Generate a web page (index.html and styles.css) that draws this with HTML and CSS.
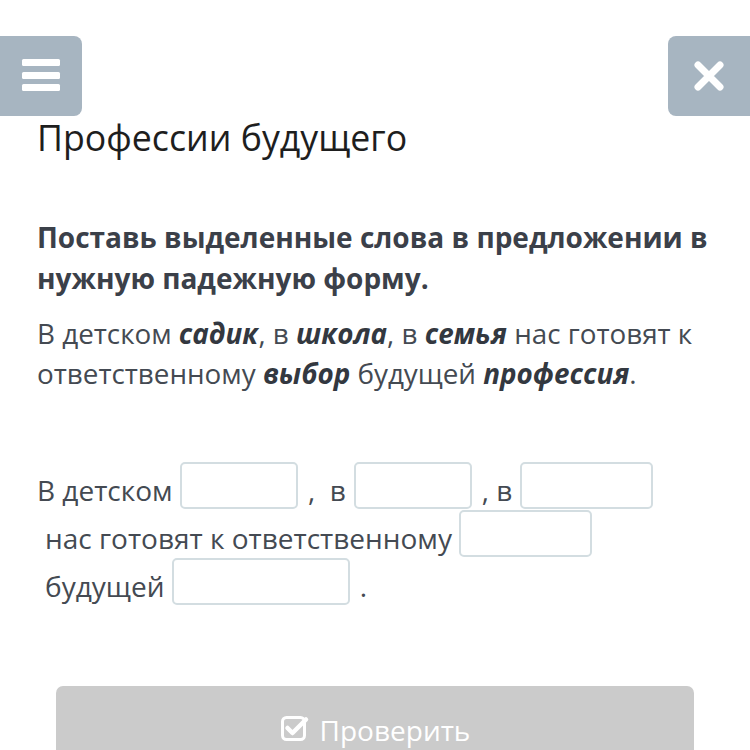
FILE: index.html
```html
<!DOCTYPE html>
<html lang="ru">
<head>
<meta charset="utf-8">
<link rel="stylesheet" href="styles.css">
</head>
<body>
<div class="topbar">
  <div class="tbtn menu">
    <svg width="40" height="36" viewBox="0 0 40 36"><rect x="1" y="1" width="38" height="7" rx="1.5" fill="#fff"/><rect x="1" y="14" width="38" height="7" rx="1.5" fill="#fff"/><rect x="1" y="26" width="38" height="7" rx="1.5" fill="#fff"/></svg>
  </div>
  <div class="tbtn close">
    <svg width="32" height="32" viewBox="0 0 32 32"><path d="M5 5 L27 27 M27 5 L5 27" stroke="#fff" stroke-width="7" stroke-linecap="round"/></svg>
  </div>
</div>
<main class="content">
  <h1 class="title">Профессии будущего</h1>
  <p class="task">Поставь выделенные слова в предложении в нужную падежную форму.</p>
  <p class="text">В детском <b><i>садик</i></b>, в <b><i>школа</i></b>, в <b><i>семья</i></b> нас готовят к ответственному <b><i>выбор</i></b> будущей <b><i>профессия</i></b>.</p>
  <div class="fill">
    <div class="row">В детском <span class="inp w118"></span><span class="gap1">,&nbsp; в</span><span class="inp w118"></span><span class="gap2">, в</span><span class="inp w133"></span></div>
    <div class="row indent">нас готовят к ответственному <span class="inp w133"></span></div>
    <div class="row indent">будущей <span class="inp w178"></span><span class="dot">.</span></div>
  </div>
</main>
<div class="btnwrap">
  <div class="check">
    <svg width="30" height="30" viewBox="0 0 30 30"><rect x="2.5" y="4.5" width="22" height="22" rx="4" fill="none" stroke="#fff" stroke-width="3"/><path d="M7.5 15 L12.5 20 L26 6.5" fill="none" stroke="#fff" stroke-width="4.5" stroke-linecap="round" stroke-linejoin="round"/></svg>
    <span>Проверить</span>
  </div>
</div>
</body>
</html>
```
FILE: styles.css
```css
html, body {
  margin: 0;
  padding: 0;
  background: #fff;
  font-family: "Open Sans", "Noto Sans", sans-serif;
  width: 750px;
  height: 750px;
  overflow: hidden;
}
.topbar {
  display: flex;
  justify-content: space-between;
  margin-top: 36px;
  height: 80px;
}
.tbtn {
  width: 82px;
  height: 80px;
  background: #a7b5c1;
  display: flex;
  align-items: center;
  justify-content: center;
}
.menu { border-radius: 0 8px 8px 0; }
.close { border-radius: 8px 0 0 8px; }
.content {
  padding: 0 37px;
}
.title {
  margin: -3px 0 0;
  font-size: 35.7px;
  font-weight: 400;
  color: #1e1e1e;
  line-height: 48px;
}
.task {
  margin: 56px 0 0;
  font-size: 28px;
  font-weight: 700;
  line-height: 41px;
  color: #3b4049;
}
.text {
  margin: 14px 0 0;
  font-size: 27.8px;
  line-height: 40px;
  color: #444a52;
}
.text b { color: #333840; }
.fill {
  margin-top: 73px;
  font-size: 28px;
  color: #444a52;
}
.row {
  display: flex;
  align-items: center;
  height: 48px;
  white-space: pre;
}
.indent { padding-left: 8px; }
.inp {
  display: inline-block;
  height: 43px;
  border: 2px solid #d3dde1;
  border-radius: 5px;
  box-sizing: content-box;
  margin-top: -9px;
}
.w118 { width: 114px; }
.w133 { width: 129px; }
.w178 { width: 174px; }
.gap1 { padding: 0 8px 0 10px; }
.gap2 { padding: 0 8px 0 10px; }
.dot { padding-left: 10px; }
.btnwrap {
  padding: 0 56px;
  margin-top: 76px;
}
.check {
  height: 80px;
  background: #cbcbcb;
  border-radius: 7px 7px 0 0;
  display: flex;
  align-items: flex-start;
  justify-content: center;
  gap: 10px;
  color: #fff;
  font-size: 28px;
  line-height: 40px;
  padding-top: 24px;
  box-sizing: border-box;
}
.check svg { margin-top: 3px; }
```
